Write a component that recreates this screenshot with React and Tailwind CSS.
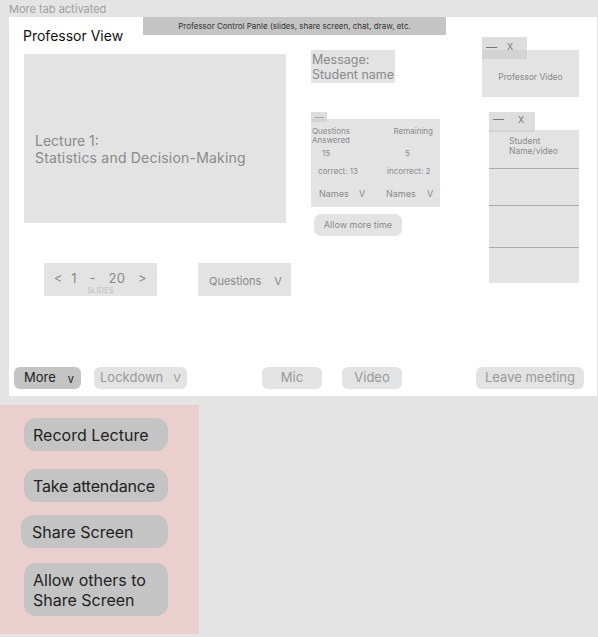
import React from 'react';

const font = { fontFamily: 'Inter, "Noto Sans", sans-serif' };

const Tab = ({ className, children }) => (
  <div className={`absolute flex items-center text-[10px] text-[#777] bg-[#c8c8c8]/60 ${className}`}>{children}</div>
);

const BarBtn = ({ children, className }) => (
  <div className={`h-[22px] rounded-[6px] flex items-center text-[13px] ${className}`}>{children}</div>
);

const MenuBtn = ({ children, className }) => (
  <div className={`rounded-[12px] bg-[#c4c4c4] text-[16px] leading-[20px] text-[#222] flex items-center px-[9px] ${className}`}>{children}</div>
);

export default function App() {
  return (
    <div className="w-[598px] h-[637px] bg-[#e4e4e4] flex flex-col" style={font}>
      <div className="h-[17px] pl-[9px] pt-[2px] text-[11px] leading-[14px] text-[#a0a0a0]">More tab activated</div>

      {/* main white panel */}
      <div className="ml-[9px] w-[588px] h-[379px] bg-white relative flex flex-col">
        <div className="absolute top-0 left-[134px] w-[303px] h-[18px] bg-[#c4c4c4] flex items-center justify-center text-[8px] text-[#333]">
          Professor Control Panle (slides, share screen, chat, draw, etc.
        </div>

        <div className="h-[350px] flex">
          {/* left */}
          <div className="ml-[14px] w-[278px] flex flex-col">
            <div className="mt-[10px] h-[17px] text-[14px] leading-[17px] text-[#111]">Professor View</div>
            <div className="mt-[10px] ml-[1px] w-[262px] h-[169px] bg-[#e3e3e3] flex flex-col pt-[78px] pl-[11px] text-[14px] leading-[17px] text-[#8a8a8a]">
              <div>Lecture 1:</div>
              <div className="tracking-[0.2px]">Statistics and Decision-Making</div>
            </div>
            <div className="mt-[40px] flex">
              <div className="ml-[21px] w-[113px] h-[33px] bg-[#e3e3e3] flex flex-col items-center text-[#8a8a8a]">
                <div className="mt-[7px] text-[13px] leading-[16px] tracking-[0.5px] whitespace-pre">{'<  1   -   20   >'}</div>
                <div className="mt-[1px] text-[7px] leading-[8px] text-[#bbb] tracking-[0.3px]">SLIDES</div>
              </div>
              <div className="ml-[41px] w-[93px] h-[33px] bg-[#e3e3e3] flex items-center pl-[11px] pt-[3px] text-[11px] text-[#8a8a8a]">
                <span>Questions</span>
                <span className="ml-[13px]">V</span>
              </div>
            </div>
          </div>

          {/* middle */}
          <div className="ml-[10px] w-[140px] flex flex-col">
            <div className="mt-[33px] w-[84px] h-[33px] bg-[#e3e3e3] text-[12.5px] leading-[15px] text-[#8a8a8a] pt-[2px] pl-[1px]">
              <div>Message:</div>
              <div>Student name</div>
            </div>
            <div className="mt-[36px] relative w-[129px] h-[88px] bg-[#e3e3e3] text-[8px] leading-[9px] text-[#8a8a8a]">
              <Tab className="-top-[7px] left-0 w-[16px] h-[10px] justify-center">
                <div className="w-[10px] h-[1px] bg-[#aaa]" />
              </Tab>
              <div className="flex justify-between pt-[8px] pl-[1px] pr-[7px]">
                <div>Questions<br />Answered</div>
                <div>Remaining</div>
              </div>
              <div className="flex mt-[4px] pl-[11px]">
                <span className="w-[83px]">15</span>
                <span>5</span>
              </div>
              <div className="flex mt-[9px] pl-[7px]">
                <span className="w-[69px]">correct: 13</span>
                <span>incorrect: 2</span>
              </div>
              <div className="flex mt-[13px] pl-[8px] text-[9px]">
                <span className="w-[40px]">Names</span>
                <span className="w-[27px]">V</span>
                <span className="w-[41px]">Names</span>
                <span>V</span>
              </div>
            </div>
            <div className="mt-[7px] ml-[3px] w-[88px] h-[22px] rounded-[7px] bg-[#e3e3e3] flex items-center justify-center text-[9px] text-[#8a8a8a]">
              Allow more time
            </div>
          </div>

          {/* right */}
          <div className="ml-[31px] flex flex-col">
            <div className="mt-[33px] relative w-[97px] h-[47px] bg-[#e3e3e3] flex items-center justify-center pt-[7px] text-[8.5px] text-[#8a8a8a]">
              <Tab className="-top-[13px] left-0 w-[45px] h-[22px] items-start pt-[2px]">
                <span className="ml-[4px] text-[11px]">—</span>
                <span className="ml-[10px] text-[9px] mt-[1px]">X</span>
              </Tab>
              Professor Video
            </div>
            <div className="mt-[33px] ml-[7px] relative w-[90px] h-[153px] bg-[#e3e3e3] flex flex-col text-[8.5px] leading-[10px] text-[#8a8a8a]">
              <Tab className="-top-[18px] left-0 w-[46px] h-[20px] items-start pt-[2px]">
                <span className="ml-[4px] text-[11px]">—</span>
                <span className="ml-[14px] text-[9px] mt-[1px]">X</span>
              </Tab>
              <div className="h-[39px] border-b border-[#aaa] pl-[20px] pt-[6px]">Student<br />Name/video</div>
              <div className="h-[37px] border-b border-[#aaa]" />
              <div className="h-[42px] border-b border-[#aaa]" />
              <div className="flex-1" />
            </div>
          </div>
        </div>

        {/* bottom bar */}
        <div className="flex">
          <BarBtn className="ml-[5px] w-[67px] bg-[#c4c4c4] text-[#222] pl-[10px]">
            <span>More</span>
            <span className="ml-[12px] text-[11px] mt-[2px]">v</span>
          </BarBtn>
          <BarBtn className="ml-[13px] w-[93px] bg-[#e3e3e3] text-[#999] pl-[6px]">
            <span>Lockdown</span>
            <span className="ml-[10px] text-[11px]">V</span>
          </BarBtn>
          <BarBtn className="ml-[75px] w-[60px] bg-[#e3e3e3] text-[#999] justify-center">Mic</BarBtn>
          <BarBtn className="ml-[20px] w-[60px] bg-[#e3e3e3] text-[#999] justify-center">Video</BarBtn>
          <BarBtn className="ml-[74px] w-[108px] bg-[#e3e3e3] text-[#999] justify-center">Leave meeting</BarBtn>
        </div>
      </div>

      {/* More menu */}
      <div className="mt-[9px] w-[199px] h-[229px] bg-[#ebcfcf] flex flex-col">
        <MenuBtn className="mt-[13px] ml-[24px] w-[144px] h-[33px]">Record Lecture</MenuBtn>
        <MenuBtn className="mt-[18px] ml-[24px] w-[144px] h-[33px] tracking-[-0.2px]">Take attendance</MenuBtn>
        <MenuBtn className="mt-[13px] ml-[21px] w-[147px] h-[33px] pl-[11px]">Share Screen</MenuBtn>
        <MenuBtn className="mt-[15px] ml-[24px] w-[144px] h-[53px]">
          <div>Allow others to<br />Share Screen</div>
        </MenuBtn>
      </div>
    </div>
  );
}
